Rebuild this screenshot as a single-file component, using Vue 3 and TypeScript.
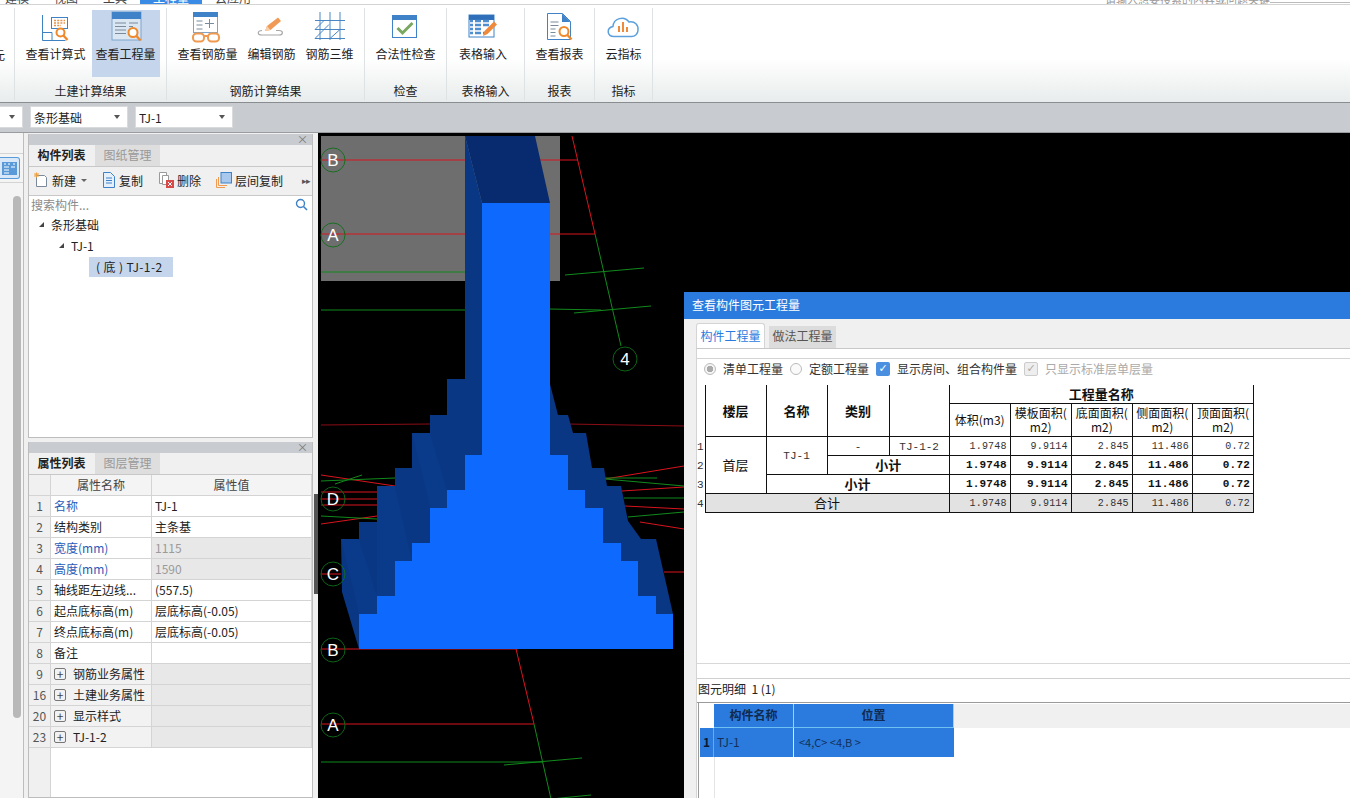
<script setup lang="ts">
type Item = { label: string; icon: string; active?: boolean }
type Group = { label: string; width: number; items: Item[]; start?: boolean }

const groups: Group[] = [
  { label: '土建计算结果', width: 152, items: [
    { label: '查看计算式', icon: 'calc' },
    { label: '查看工程量', icon: 'qty', active: true },
  ] },
  { label: '钢筋计算结果', width: 198, items: [
    { label: '查看钢筋量', icon: 'rebar' },
    { label: '编辑钢筋', icon: 'edit' },
    { label: '钢筋三维', icon: 'three' },
  ] },
  { label: '检查', width: 82, items: [{ label: '合法性检查', icon: 'check' }] },
  { label: '表格输入', width: 78, start: true, items: [{ label: '表格输入', icon: 'table' }] },
  { label: '报表', width: 70, items: [{ label: '查看报表', icon: 'report' }] },
  { label: '指标', width: 58, items: [{ label: '云指标', icon: 'cloud' }] },
]

type Prop = { no: number; name: string; value?: string; blue?: boolean; muted?: boolean; expand?: boolean }
const props: Prop[] = [
  { no: 1, name: '名称', value: 'TJ-1', blue: true },
  { no: 2, name: '结构类别', value: '主条基' },
  { no: 3, name: '宽度(mm)', value: '1115', blue: true, muted: true },
  { no: 4, name: '高度(mm)', value: '1590', blue: true, muted: true },
  { no: 5, name: '轴线距左边线...', value: '(557.5)' },
  { no: 6, name: '起点底标高(m)', value: '层底标高(-0.05)' },
  { no: 7, name: '终点底标高(m)', value: '层底标高(-0.05)' },
  { no: 8, name: '备注', value: '' },
  { no: 9, name: '钢筋业务属性', expand: true },
  { no: 16, name: '土建业务属性', expand: true },
  { no: 20, name: '显示样式', expand: true },
  { no: 23, name: 'TJ-1-2', expand: true },
]

const qtyHeads = ['体积(m3)', '模板面积(\nm2)', '底面面积(\nm2)', '侧面面积(\nm2)', '顶面面积(\nm2)']
const qtyValues = ['1.9748', '9.9114', '2.845', '11.486', '0.72']
const colWidths = [8, 61, 61, 62, 60, 61, 61, 61, 60, 61]

const axes = [
  { t: 'B', x: 333, y: 159 },
  { t: 'A', x: 333, y: 234 },
  { t: '4', x: 625, y: 358 },
  { t: 'D', x: 333, y: 498 },
  { t: 'C', x: 333, y: 573 },
  { t: 'B', x: 333, y: 649 },
  { t: 'A', x: 333, y: 724 },
]

const redLines = [
  [321, 159, 578, 159], [572, 135, 595, 233], [321, 233, 595, 233],
  [516, 648, 534, 723], [321, 648, 517, 648], [321, 723, 534, 723],
  [321, 491, 377, 491], [321, 498, 377, 498], [321, 504, 377, 504],
  [321, 474, 395, 485], [321, 523, 377, 515], [321, 573, 341, 573],
  [605, 478, 684, 465], [622, 490, 684, 486], [625, 505, 684, 508],
  [640, 521, 684, 528], [664, 571, 684, 571],
]
const dimRed = [[321, 424, 430, 423], [568, 423, 684, 425]]
const greenLines = [
  [595, 233, 621, 345], [321, 271, 465, 271], [565, 274, 644, 267],
  [321, 309, 465, 309], [550, 308, 601, 309], [574, 312, 651, 305],
  [321, 761, 543, 761], [504, 764, 582, 757], [534, 723, 551, 798], [551, 798, 591, 794],
  [321, 480, 395, 477], [335, 483, 362, 474], [321, 515, 377, 518],
  [605, 477, 657, 477], [605, 478, 684, 485], [624, 497, 684, 497], [628, 516, 684, 511],
]
const steps = [
  [482, 202, 68, 252], [465, 454, 103, 35], [447, 489, 138, 18], [430, 507, 173, 35],
  [412, 542, 209, 18], [395, 560, 243, 35], [377, 595, 279, 18], [359, 613, 314, 35],
]
</script>

<template>
  <div class="app">
    <div class="menu-strip">
      <span class="menu-tab">建模</span>
      <span class="menu-tab">视图</span>
      <span class="menu-tab near">工具</span>
      <span class="menu-tab near on">工程量</span>
      <span class="menu-tab">云应用</span>
      <span class="menu-hint">请输入想要搜索的内容或问题关键字，查找相关帮助内容</span>
      <span class="menu-rule"></span>
    </div>

    <div class="ribbon">
      <div class="cut-group"><span class="cut-label">元</span></div>
      <section
        v-for="g in groups"
        :key="g.label"
        class="group"
        :class="{ start: g.start }"
        :style="{ width: g.width + 'px' }"
      >
        <div class="group-items">
          <button v-for="it in g.items" :key="it.label" class="rb-btn" :class="{ active: it.active }">
            <svg class="rb-icon" width="34" height="32" viewBox="0 0 34 32">
              <g v-if="it.icon === 'calc'">
                <path d="M4.500 4v25.500h23M4.500 21.500h9.500v8" fill="none" stroke="#3f82c4" />
                <rect x="13.500" y="6.500" width="16" height="11" fill="#fff" stroke="#3f82c4" />
                <path d="M16 9.500h11M16 12h11M16 14.500h7" stroke="#e8924a" stroke-width="1.400" stroke-dasharray="2 1.200" />
                <circle cx="22.500" cy="21.500" r="4" fill="#fff" stroke="#ef8a2c" stroke-width="2" />
                <path d="M25.500 24.500l4 4.500" stroke="#ef8a2c" stroke-width="2.400" />
              </g>
              <g v-else-if="it.icon === 'qty'">
                <rect x="3" y="1" width="29" height="28" fill="#dbe6f3" stroke="#7ea4cc" />
                <rect x="3" y="1" width="29" height="7" fill="#3f82c8" />
                <path d="M6 12h11M6 15.500h11M6 19h11M6 22.500h11M20 12h9M20 15.500h4" stroke="#7a8a9a" />
                <circle cx="24" cy="21.500" r="4.500" fill="#fff" stroke="#ef8a2c" stroke-width="2" />
                <path d="M27.500 25l4 4.500" stroke="#ef8a2c" stroke-width="2.400" />
              </g>
              <g v-else-if="it.icon === 'rebar'">
                <rect x="3.500" y="1.500" width="24" height="20" fill="#fff" stroke="#7ea4cc" />
                <rect x="3" y="1" width="25" height="5" fill="#3f82c8" />
                <path d="M6.500 10h6M6.500 14h6M6.500 18h6M15 12.500h9M19.500 8v9" stroke="#7a8a9a" />
                <rect x="3" y="22.500" width="11" height="8" rx="3.500" fill="#fff" stroke="#ef9a50" stroke-width="2" />
                <rect x="18" y="22.500" width="11" height="8" rx="3.500" fill="#fff" stroke="#ef9a50" stroke-width="2" />
                <path d="M14 25h4" stroke="#ef9a50" stroke-width="2" />
              </g>
              <g v-else-if="it.icon === 'edit'">
                <path d="M8 19.500c-5 0-5 4.500 0 4.500h17c4.500 0 4.500-4.500 0-4.500h-3" fill="none" stroke="#a8a8a8" stroke-width="1.200" />
                <path d="M11 20l2-5L24 6.500l3 3.500-10.500 9z" fill="#f09a55" />
                <path d="M11 20l2-5 3.500 4z" fill="#f7d0ac" />
              </g>
              <g v-else-if="it.icon === 'three'" fill="none" stroke="#4a86c4">
                <path d="M7 1v28M17 1v28M27 1v28M2 9.500h30M2 18.500h30M2 27.500h30M2 18.500L11 9.500M2 27.500L16 13.500M17 27.500L27 18.500" />
              </g>
              <g v-else-if="it.icon === 'check'">
                <rect x="4.500" y="4.500" width="24" height="22" fill="#fff" stroke="#3f82c8" />
                <rect x="4" y="4" width="25" height="5" fill="#3f82c8" />
                <path d="M9.500 17l5 5 10-10" fill="none" stroke="#7aa860" stroke-width="3" />
              </g>
              <g v-else-if="it.icon === 'table'">
                <rect x="3" y="4" width="25" height="22" fill="#fff" stroke="#3f82c8" />
                <rect x="3" y="4" width="25" height="5" fill="#2f6eb8" />
                <path d="M4 10h3M9 10h6M17 10h6M4 14h3M9 14h6M17 14h6M4 18h3M9 18h6M4 22h3M9 22h6M17 22h2" stroke="#4f8fd0" stroke-width="2.400" />
                <path d="M17 25l1.500-5 9.500-9.500 3 3-9.500 9.500z" fill="#ef8a3c" />
              </g>
              <g v-else-if="it.icon === 'report'">
                <path d="M5.500 2.500h15l8 8v18h-23z" fill="#fff" stroke="#3f82c8" />
                <path d="M20 2.500l8.500 8.500H20z" fill="#3f82c8" />
                <path d="M8.500 11h8M8.500 14.500h8M8.500 18h5M8.500 21.500h5M8.500 25h5" stroke="#7a8a9a" />
                <circle cx="22" cy="20.500" r="4.500" fill="#fff" stroke="#ef8a2c" stroke-width="2" />
                <path d="M25.500 24l4 4.500" stroke="#ef8a2c" stroke-width="2.400" />
              </g>
              <g v-else>
                <path d="M8 25.500c-7 0-8-8.500-1-10 .5-8 11-11.500 16-4.500 6-1 9.500 3 9 8 0 4-3 6.500-6.500 6.500z" fill="#fff" stroke="#5ba0dc" stroke-width="1.500" />
                <path d="M13 21v-6M17 21V11M21 21v-5" stroke="#ef8a3c" stroke-width="2" />
              </g>
            </svg>
            <span class="rb-text">{{ it.label }}</span>
          </button>
        </div>
        <div class="group-label">{{ g.label }}</div>
      </section>
    </div>

    <div class="selectors">
      <div class="combo c1"><span></span><i></i></div>
      <div class="combo c2"><span>条形基础</span><i></i></div>
      <div class="combo c2"><span>TJ-1</span><i></i></div>
    </div>

    <div class="main">
      <aside class="dock">
        <div class="dock-band">
          <div class="dock-tile">
            <svg width="15" height="13" viewBox="0 0 15 13">
              <rect width="15" height="13" fill="#5a9ad8" />
              <path d="M2 5h5M2 8h5M2 11h5M9 5h4" stroke="#fff" />
              <path d="M2 2h2M6 2h2M11 2h2" stroke="#fff" />
            </svg>
          </div>
        </div>
        <div class="dock-scroll"></div>
      </aside>

      <div class="panels">
        <section class="panel tree-panel">
          <div class="panel-head">×</div>
          <div class="panel-tabs">
            <span class="ptab on">构件列表</span>
            <span class="ptab">图纸管理</span>
          </div>
          <div class="tools">
            <span class="tool">
              <svg width="16" height="16" viewBox="0 0 16 16">
                <path d="M3.500 3.500h8l2 2v9h-10z" fill="#fff" stroke="#7a8a9a" />
                <path d="M1 3h5M3.500 .5v5M1.500 1l4 4M5.500 1l-4 4" stroke="#f0a040" />
              </svg>
              新建
              <i class="tool-caret"></i>
            </span>
            <span class="tool">
              <svg width="14" height="16" viewBox="0 0 14 16">
                <path d="M1.500 .5h7l4 4v11h-11z" fill="#e6f0fa" stroke="#3f82c8" />
                <path d="M4 6h6M4 8.500h6M4 11h6" stroke="#3f82c8" />
              </svg>
              复制
            </span>
            <span class="tool">
              <svg width="16" height="16" viewBox="0 0 16 16">
                <path d="M1.500 .5h7v11h-7z" fill="#fff" stroke="#9a9a9a" />
                <path d="M4.500 3.500h6v9h-6z" fill="#fff" stroke="#9a9a9a" />
                <rect x="8" y="8" width="8" height="8" fill="#d84a4a" />
                <path d="M10 10l4 4M14 10l-4 4" stroke="#fff" />
              </svg>
              删除
            </span>
            <span class="tool">
              <svg width="16" height="16" viewBox="0 0 16 16">
                <path d="M.5 7v8.500H9" fill="none" stroke="#ef9a50" />
                <path d="M2.500 5v8.500H11" fill="none" stroke="#ef9a50" />
                <rect x="5" y=".5" width="10.500" height="10.500" fill="#a8c8ee" stroke="#3f82c8" />
              </svg>
              层间复制
            </span>
            <span class="tool-more">▸▸</span>
          </div>
          <div class="search">
            <span class="search-ph">搜索构件...</span>
            <svg width="13" height="13" viewBox="0 0 13 13">
              <circle cx="5.500" cy="5.500" r="4" fill="none" stroke="#3f82c8" stroke-width="1.400" />
              <path d="M8.500 8.500l3.500 3.500" stroke="#3f82c8" stroke-width="1.600" />
            </svg>
          </div>
          <div class="tree">
            <div class="tree-row lv1"><i class="tree-arrow"></i>条形基础</div>
            <div class="tree-row lv2"><i class="tree-arrow"></i>TJ-1</div>
            <div class="tree-row lv3"><span class="tree-sel">( 底 ) TJ-1-2</span></div>
          </div>
        </section>

        <section class="panel prop-panel">
          <div class="panel-head">×</div>
          <div class="panel-tabs">
            <span class="ptab on">属性列表</span>
            <span class="ptab">图层管理</span>
          </div>
          <div class="prop-grid">
            <div class="prow phead">
              <div class="pno"></div>
              <div class="pname">属性名称</div>
              <div class="pval">属性值</div>
            </div>
            <div v-for="p in props" :key="p.no" class="prow" :class="{ 'prow-expand': p.expand }">
              <div class="pno">{{ p.no }}</div>
              <div class="pname" :class="{ blue: p.blue }">
                <span v-if="p.expand" class="plus">+</span>{{ p.name }}
              </div>
              <div class="pval" :class="{ muted: p.muted }">{{ p.value }}</div>
            </div>
            <div class="prow filler"><div class="pno"></div></div>
          </div>
        </section>
      </div>

      <div class="sash"><span class="sash-grip"></span></div>

      <div class="canvas">
        <svg class="scene" width="1032" height="666" viewBox="318 132 1032 666">
          <rect x="321" y="135" width="239" height="145" fill="#6e6e6e" />
          <line v-for="(l, i) in dimRed" :key="'d' + i" :x1="l[0]" :y1="l[1]" :x2="l[2]" :y2="l[3]" stroke="#8c0d16" />
          <line v-for="(l, i) in redLines" :key="'r' + i" :x1="l[0]" :y1="l[1]" :x2="l[2]" :y2="l[3]" stroke="#d8141e" />
          <line v-for="(l, i) in greenLines" :key="'g' + i" :x1="l[0]" :y1="l[1]" :x2="l[2]" :y2="l[3]" stroke="#118a1c" />

          <polygon points="465,135 535,135 550,202 482,202" fill="#072b6e" />
          <polygon points="465,135 482,202 482,454 465,454" fill="#0a3784" />
          <polygon
            points="465,378 447,378 447,414 430,414 430,432 412,432 412,467 395,467 395,485 377,485 377,521 359,521 359,538 341,538 342,591 359,648 359,613 377,613 377,595 395,595 395,560 412,560 412,542 430,542 430,507 447,507 447,489 465,489"
            fill="#0a3784"
          />
          <polygon points="377,485 395,485 412,560 395,560 395,595 377,595" fill="#0a3a8a" />
          <polygon points="412,432 430,432 447,489 447,507 430,507" fill="#0a3a8a" />
          <polygon points="341,538 359,538 377,595 377,613 359,613" fill="#0a3a8a" />
          <polygon
            points="550,383 558,414 568,414 573,432 586,432 592,467 604,467 607,485 621,485 628,520 641,538 656,538 673,613 656,613 656,595 638,595 638,560 621,560 621,542 603,542 603,507 585,507 585,489 568,489 568,454 550,454"
            fill="#0a3784"
          />
          <rect v-for="(s, i) in steps" :key="'s' + i" :x="s[0]" :y="s[1]" :width="s[2]" :height="s[3]" fill="#0e69ff" />

          <g v-for="(a, i) in axes" :key="'a' + i">
            <circle :cx="a.x" :cy="a.y" r="12" fill="none" stroke="#0f6e1a" stroke-width=".9" />
            <text class="axis-text" :x="a.x" :y="a.y + 6">{{ a.t }}</text>
          </g>
        </svg>

        <div class="dialog">
          <div class="dlg-title">查看构件图元工程量</div>
          <div class="dlg-body">
            <div class="dlg-tabs">
              <span class="dtab on">构件工程量</span>
              <span class="dtab">做法工程量</span>
            </div>
            <div class="dlg-pane">
              <div class="opts">
                <span class="opt"><i class="radio"></i>清单工程量</span>
                <span class="opt"><i class="radio empty"></i>定额工程量</span>
                <span class="opt"><i class="cb on">✓</i>显示房间、组合构件量</span>
                <span class="opt gray"><i class="cb off">✓</i>只显示标准层单层量</span>
              </div>

              <table class="qty">
                <colgroup><col v-for="(w, i) in colWidths" :key="i" :width="w" /></colgroup>
                <tr class="r-top">
                  <td rowspan="2" class="num"></td>
                  <th rowspan="2">楼层</th>
                  <th rowspan="2">名称</th>
                  <th rowspan="2">类别</th>
                  <th rowspan="2"></th>
                  <th colspan="5" class="title-cell">工程量名称</th>
                </tr>
                <tr class="r-head">
                  <td v-for="h in qtyHeads" :key="h" class="head-cell">{{ h }}</td>
                </tr>
                <tr>
                  <td class="num">1</td>
                  <td rowspan="3" class="cjk">首层</td>
                  <td rowspan="2" class="mono">TJ-1</td>
                  <td class="mono">-</td>
                  <td class="mono">TJ-1-2</td>
                  <td v-for="v in qtyValues" :key="v" class="v">{{ v }}</td>
                </tr>
                <tr class="bold">
                  <td class="num">2</td>
                  <td colspan="2" class="sum">小计</td>
                  <td v-for="v in qtyValues" :key="v" class="v">{{ v }}</td>
                </tr>
                <tr class="bold">
                  <td class="num">3</td>
                  <td colspan="3" class="sum">小计</td>
                  <td v-for="v in qtyValues" :key="v" class="v">{{ v }}</td>
                </tr>
                <tr class="total">
                  <td class="num">4</td>
                  <td colspan="4" class="cjk">合计</td>
                  <td v-for="v in qtyValues" :key="v" class="v">{{ v }}</td>
                </tr>
              </table>

              <div class="spacer"></div>
              <div class="split"></div>
              <div class="detail-label">图元明细&nbsp;&nbsp;1 (1)</div>
              <div class="detail">
                <div class="drow dh">
                  <div class="dno"></div>
                  <div class="dname">构件名称</div>
                  <div class="dpos">位置</div>
                </div>
                <div class="drow dr">
                  <div class="dno">1</div>
                  <div class="dname">TJ-1</div>
                  <div class="dpos">&lt;4,C&gt; &lt;4,B &gt;</div>
                </div>
                <div class="dfill"></div>
              </div>
            </div>
          </div>
        </div>
      </div>
    </div>
  </div>
</template>

<style>
html, body { margin: 0; background: #000; }
</style>

<style scoped>
.app {
  width: 1350px;
  height: 798px;
  overflow: hidden;
  display: flex;
  flex-direction: column;
  font: 12px "Noto Sans CJK SC", "Liberation Sans", sans-serif;
  color: #222;
  background: #f0f0f0;
}

.menu-strip {
  height: 4px;
  flex: none;
  display: flex;
  overflow: hidden;
  padding-left: 5px;
  background: #fff;
  border-bottom: 1px solid #d4d4d4;
  color: #444;
  line-height: 12px;
}
.menu-tab { flex: none; height: 12px; margin-top: -8px; margin-right: 25px; }
.menu-tab.near { margin-right: 13px; }
.menu-tab.on {
  width: 62px;
  height: 20px;
  margin-top: -16px;
  padding-top: 8px;
  box-sizing: border-box;
  background: #3a8be6;
  color: #fff;
  text-align: center;
}
.menu-hint { flex: none; width: 165px; margin-left: 829px; margin-top: -7px; white-space: nowrap; overflow: hidden; font-size: 11px; color: #999; }
.menu-rule { flex: 1; height: 1px; margin-top: 2px; background: #bbb; }

.ribbon {
  height: 97px;
  flex: none;
  display: flex;
  background: linear-gradient(#fff 0, #fff 55%, #e9ecec 100%);
  border-bottom: 1px solid #8a8d90;
}
.cut-group {
  width: 15px;
  flex: none;
  overflow: hidden;
  position: relative;
  border-right: 1px solid #dfe2e2;
  margin: 3px 0 2px;
  box-sizing: border-box;
}
.cut-label { position: absolute; left: -7px; top: 38px; }
.group {
  flex: none;
  box-sizing: border-box;
  display: flex;
  flex-direction: column;
  margin: 3px 0 2px;
  border-right: 1px solid #dfe2e2;
}
.group-items {
  flex: 1;
  display: flex;
  justify-content: center;
  gap: 2px;
  padding-top: 2px;
}
.group.start .group-items { justify-content: flex-start; padding-left: 8px; }
.rb-btn {
  height: 67px;
  padding: 1px 4px 0;
  border: 0;
  background: none;
  display: flex;
  flex-direction: column;
  align-items: center;
  font: inherit;
  color: inherit;
}
.rb-btn.active { background: #c5d6ec; }
.rb-icon { flex: none; }
.rb-text { margin-top: 2px; line-height: 18px; white-space: nowrap; }
.group-label { height: 18px; line-height: 18px; text-align: center; margin-bottom: 0; }

.selectors {
  height: 30px;
  flex: none;
  box-sizing: border-box;
  display: flex;
  gap: 7px;
  padding-top: 3px;
  background: #c8cbcf;
  border-bottom: 1px solid #9a9da0;
}
.combo {
  height: 22px;
  box-sizing: border-box;
  background: #fff;
  display: flex;
  align-items: center;
  justify-content: space-between;
  padding: 0 7px 0 3px;
  border: 1px solid #d8dadc;
}
.combo.c1 { width: 23px; border-left: 0; }
.combo.c2 { width: 98px; }
.combo i {
  width: 0;
  height: 0;
  border: 3px solid transparent;
  border-top: 4px solid #555;
  border-bottom: 0;
}

.main { flex: 1; min-height: 0; display: flex; }

.dock {
  width: 24px;
  flex: none;
  box-sizing: border-box;
  border-right: 1px solid #bdbdbd;
  background: #f4f4f4;
  position: relative;
}
.dock-band {
  margin-top: 20px;
  height: 30px;
  box-sizing: border-box;
  border-top: 1px solid #d4d4d4;
  border-bottom: 1px solid #d4d4d4;
  display: flex;
  align-items: center;
}
.dock-tile {
  width: 20px;
  height: 22px;
  box-sizing: border-box;
  background: #d8e8f8;
  border: 1px solid #5a9ad8;
  border-left: 0;
  border-radius: 0 3px 3px 0;
  display: flex;
  align-items: center;
  justify-content: center;
}
.dock-scroll {
  width: 8px;
  height: 522px;
  margin: 13px 0 0 13px;
  background: #b8b8b8;
  border-radius: 4px;
}

.panels {
  width: 285px;
  flex: none;
  margin-left: 4px;
  padding-top: 1px;
  display: flex;
  flex-direction: column;
  gap: 4px;
}
.panel {
  box-sizing: border-box;
  display: flex;
  flex-direction: column;
  border: 1px solid #bdbdbd;
  border-top: 0;
  background: #f0f0f0;
}
.tree-panel { height: 304px; flex: none; }
.prop-panel { flex: 1; min-height: 0; }
.panel-head {
  height: 11px;
  flex: none;
  background: #c8cbcf;
  text-align: right;
  padding-right: 4px;
  font-size: 11px;
  line-height: 10px;
  color: #777;
}
.panel-tabs {
  height: 22px;
  flex: none;
  box-sizing: border-box;
  display: flex;
  border-bottom: 1px solid #c8c8c8;
}
.ptab {
  width: 65px;
  text-align: center;
  line-height: 20px;
  color: #999;
  background: #dedede;
  margin-left: 1px;
}
.ptab.on { color: #222; font-weight: 700; background: #f0f0f0; margin-left: 0; }

.tools {
  height: 29px;
  flex: none;
  box-sizing: border-box;
  display: flex;
  align-items: center;
  gap: 15px;
  padding: 0 0 2px 4px;
  position: relative;
  border-bottom: 1px solid #c8c8c8;
}
.tool { display: flex; align-items: center; gap: 3px; white-space: nowrap; }
.tool-caret {
  width: 0;
  height: 0;
  margin-left: 2px;
  border: 3px solid transparent;
  border-top: 3px solid #666;
  border-bottom: 0;
}
.tool-more { position: absolute; right: 2px; font-size: 9px; letter-spacing: -1px; color: #555; }

.search {
  height: 19px;
  flex: none;
  box-sizing: border-box;
  display: flex;
  align-items: center;
  justify-content: space-between;
  padding: 0 4px 1px 2px;
  background: #fff;
  border-bottom: 1px solid #c8c8c8;
}
.search-ph { color: #8a8a8a; }

.tree { flex: 1; background: #fff; margin-top: -1px; }
.tree-row { height: 21px; display: flex; align-items: center; gap: 7px; }
.tree-row.lv1 { padding-left: 10px; }
.tree-row.lv2 { padding-left: 30px; }
.tree-row.lv3 { padding-left: 60px; }
.tree-arrow {
  width: 0;
  height: 0;
  border-left: 5px solid transparent;
  border-bottom: 5px solid #444;
}
.tree-sel { background: #c5d6ec; height: 20px; line-height: 20px; padding: 0 10px 0 7px; white-space: nowrap; letter-spacing: .4px; }

.prop-grid { flex: 1; min-height: 0; display: flex; flex-direction: column; background: #fff; }
.prow {
  display: grid;
  grid-template-columns: 22px 101px 160px;
  height: 21px;
  flex: none;
  line-height: 20px;
  color: #222;
}
.prow > div {
  box-sizing: border-box;
  border-bottom: 1px solid #d4d4d4;
  border-right: 1px solid #d4d4d4;
  white-space: nowrap;
  overflow: hidden;
}
.pno { background: #f0f0f0; text-align: center; color: #555; }
.pname { padding-left: 3px; }
.pval { padding-left: 3px; }
.phead .pname, .phead .pval { text-align: center; background: #f4f4f4; color: #444; padding: 0; }
.blue { color: #2a5cb8; }
.muted { background: #e8e8e8; color: #9a9a9a; }
.prow-expand .pname { background: #f2f2f2; }
.prow-expand .pval { background: #e8e8e8; }
.plus {
  display: inline-block;
  width: 10px;
  height: 10px;
  line-height: 9px;
  margin-right: 7px;
  border: 1px solid #777;
  border-radius: 2px;
  text-align: center;
  vertical-align: 0;
  color: #444;
}
.prow.filler { flex: 1; height: auto; }
.prow.filler .pno { border-bottom: 0; }

.sash {
  width: 5px;
  flex: none;
  margin-left: 0;
  background: #f0f0f0;
  position: relative;
}
.sash-grip { position: absolute; left: 1px; right: 0; top: 361px; height: 100px; background: #555; }

.canvas { flex: 1; position: relative; background: #000; overflow: hidden; }
.scene { display: block; }
.axis-text {
  font: 17px "Liberation Sans", sans-serif;
  fill: #fff;
  text-anchor: middle;
}

.dialog {
  position: absolute;
  left: 366px;
  top: 159px;
  right: 0;
  bottom: 0;
  display: flex;
  flex-direction: column;
  background: #f0f0f0;
}
.dlg-title {
  height: 27px;
  flex: none;
  padding-left: 8px;
  line-height: 26px;
  background: #2b7bde;
  color: #fff;
}
.dlg-body {
  flex: 1;
  min-height: 0;
  display: flex;
  flex-direction: column;
  padding: 4px 0 0 12px;
}
.dlg-tabs { height: 25px; flex: none; display: flex; gap: 4px; align-items: flex-end; }
.dtab {
  width: 67px;
  height: 22px;
  line-height: 20px;
  text-align: center;
  background: #dcdcdc;
  color: #555;
}
.dtab.on {
  width: 69px;
  height: 25px;
  line-height: 24px;
  background: #fff;
  color: #2b7bde;
  border: 1px solid #d4d4d4;
  border-bottom: 0;
  border-radius: 3px 3px 0 0;
  box-sizing: border-box;
}
.dlg-pane {
  flex: 1;
  min-height: 0;
  display: flex;
  flex-direction: column;
  background: #fff;
  border-top: 1px solid #c8c8c8;
  border-left: 1px solid #d4d4d4;
  padding-top: 9px;
}
.opts {
  height: 23px;
  box-sizing: border-box;
  flex: none;
  display: flex;
  align-items: center;
  gap: 7px;
  padding: 0 0 3px 7px;
  border-top: 1px solid #d4d4d4;
  color: #333;
}
.opt { display: flex; align-items: center; gap: 7px; white-space: nowrap; }
.opt.gray { color: #aaa; }
.radio {
  width: 12px;
  height: 12px;
  box-sizing: border-box;
  border: 1px solid #bbb;
  border-radius: 50%;
  background: radial-gradient(circle, #aaa 0 3px, #f4f4f4 3.5px);
}
.radio.empty { background: #fafafa; }
.cb {
  width: 14px;
  height: 14px;
  border-radius: 2px;
  font: 700 11px/14px "DejaVu Sans", sans-serif;
  text-align: center;
  font-style: normal;
}
.cb.on { background: #4a8fe0; color: #fff; }
.cb.off { background: #eee; color: #aaa; border: 1px solid #ccc; box-sizing: border-box; line-height: 12px; }

.qty {
  flex: none;
  margin: 4px 0 0 0;
  border-collapse: collapse;
  table-layout: fixed;
  width: 557px;
  color: #111;
}
.qty th, .qty td {
  border: 1px solid #111;
  padding: 0;
  text-align: center;
  line-height: 15px;
  overflow: hidden;
}
.qty th { font-weight: 700; font-size: 13px; }
.qty .num { border: 0; border-right: 1px solid #111; font: 11px "Liberation Mono", monospace; text-align: right; padding: 2px 1px 0 0; color: #333; }
.qty tr { height: 19px; }
.r-top { height: 18px !important; }
.r-head { height: 33px !important; }
.qty .r-top th { border-top: 0; }
.qty .title-cell { border-top: 1px solid #111; }
.head-cell { white-space: pre-line; font-size: 12px; line-height: 14px !important; }
.cjk { font-size: 13px; }
.qty td.mono { font: 11px "Liberation Mono", monospace; color: #333; padding-top: 2px; }
.qty td.v {
  text-align: right;
  padding: 2px 3px 0 0;
  font: 10px/13px "Liberation Mono", monospace;
  color: #333;
  letter-spacing: .2px;
}
.qty .bold td.v { font: 700 11px/13px "Liberation Mono", monospace; color: #111; }
.sum { font-weight: 700; font-size: 13px; }
.total td { background: #e2e2e2; }
.qty .total .num { background: none; }

.spacer { height: 150px; flex: none; border-bottom: 1px solid #d8d8d8; }
.split { height: 14px; flex: none; background: #fff; border-bottom: 1px solid #d0d0d0; }
.detail-label { height: 23px; flex: none; line-height: 19px; padding-left: 1px; color: #222; border-bottom: 1px solid #9a9a9a; }
.detail { flex: 1; min-height: 0; display: flex; flex-direction: column; border-left: 1px solid #9a9a9a; margin-left: 1px; padding-top: 1px; }
.drow { display: grid; grid-template-columns: 14px 80px 160px; flex: none; margin-left: 1px; }
.dh { height: 24px; background: #f0f0f0; }
.dh .dno { background: #fff; }
.dh .dname, .dh .dpos {
  background: #2b7bde;
  color: #102a50;
  font-weight: 700;
  text-align: center;
  line-height: 22px;
  border-bottom: 1px solid #6ec0f0;
  border-right: 1px solid #a8ccf0;
  box-sizing: border-box;
}
.dr { height: 29px; }
.dr > div { background: #2b7bde; line-height: 28px; color: #12305a; }
.dr .dno { font-weight: 700; color: #0a1a30; text-align: center; border-right: 1px solid #6ea8e8; box-sizing: border-box; }
.dr .dname { padding-left: 3px; border-right: 1px solid #d8e8fa; box-sizing: border-box; }
.dr .dpos { padding-left: 5px; font-size: 11px; }
.dfill { flex: 1; margin-left: 15px; border-left: 1px solid #e4e4e4; }
</style>
